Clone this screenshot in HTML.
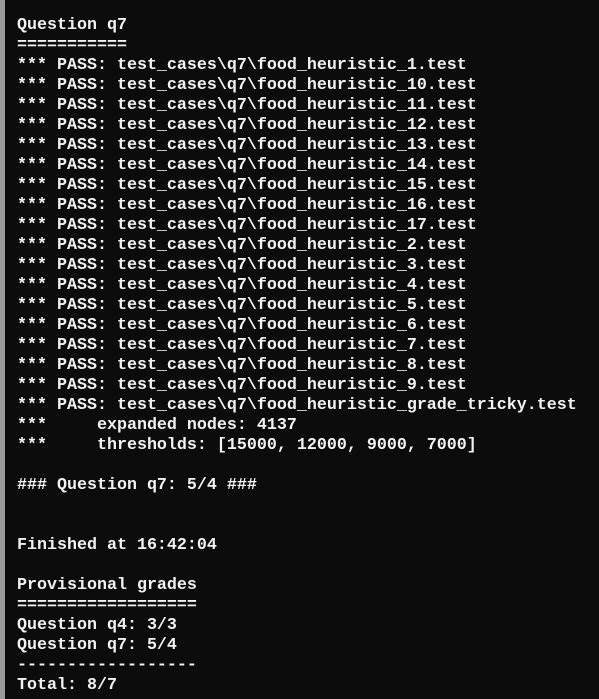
<!DOCTYPE html>
<html><head><meta charset="utf-8"><style>
html,body{margin:0;padding:0;background:#0c0c0c;}
body{width:599px;height:699px;overflow:hidden;position:relative;}
.bar{position:absolute;left:0;top:0;width:5px;height:699px;background:#9a9a9a;}
pre{position:absolute;left:17px;top:16px;margin:0;font-family:"Liberation Mono","DejaVu Sans Mono",monospace;font-weight:bold;font-size:16.67px;line-height:20px;color:#f2f2f2;}
</style></head><body><div class="bar"></div><pre>Question q7
===========
*** PASS: test_cases\q7\food_heuristic_1.test
*** PASS: test_cases\q7\food_heuristic_10.test
*** PASS: test_cases\q7\food_heuristic_11.test
*** PASS: test_cases\q7\food_heuristic_12.test
*** PASS: test_cases\q7\food_heuristic_13.test
*** PASS: test_cases\q7\food_heuristic_14.test
*** PASS: test_cases\q7\food_heuristic_15.test
*** PASS: test_cases\q7\food_heuristic_16.test
*** PASS: test_cases\q7\food_heuristic_17.test
*** PASS: test_cases\q7\food_heuristic_2.test
*** PASS: test_cases\q7\food_heuristic_3.test
*** PASS: test_cases\q7\food_heuristic_4.test
*** PASS: test_cases\q7\food_heuristic_5.test
*** PASS: test_cases\q7\food_heuristic_6.test
*** PASS: test_cases\q7\food_heuristic_7.test
*** PASS: test_cases\q7\food_heuristic_8.test
*** PASS: test_cases\q7\food_heuristic_9.test
*** PASS: test_cases\q7\food_heuristic_grade_tricky.test
***     expanded nodes: 4137
***     thresholds: [15000, 12000, 9000, 7000]

### Question q7: 5/4 ###


Finished at 16:42:04

Provisional grades
==================
Question q4: 3/3
Question q7: 5/4
------------------
Total: 8/7</pre></body></html>
